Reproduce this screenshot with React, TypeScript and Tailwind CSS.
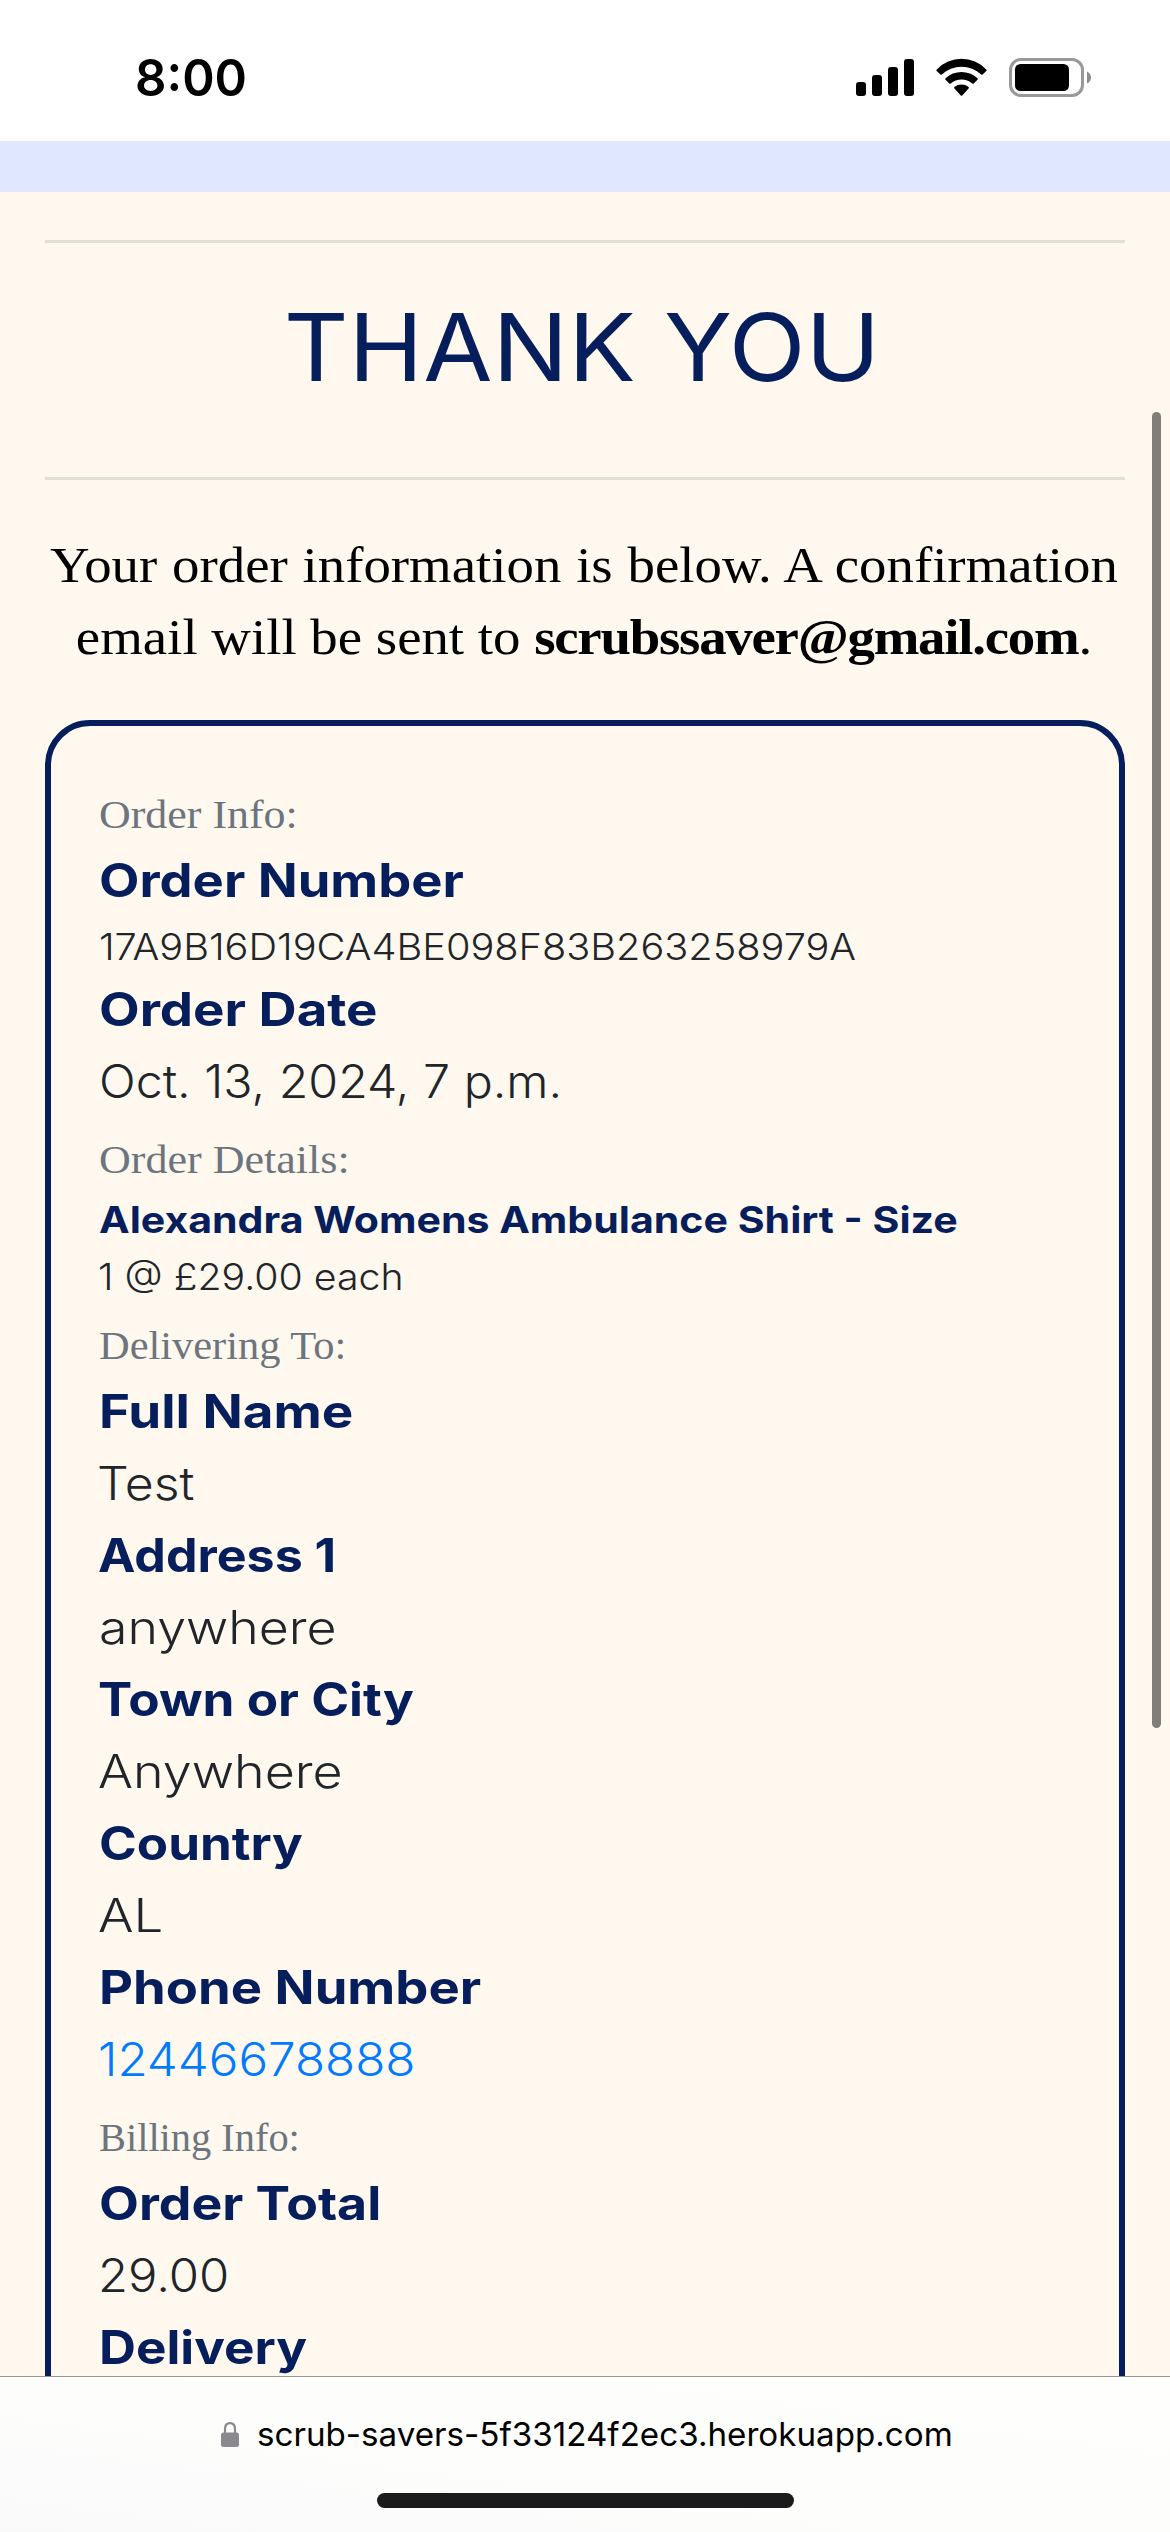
import type { ReactNode } from "react";

function Status() {
  return (
    <header className="flex h-[141px] shrink-0 items-start justify-between bg-white pr-[79px] pl-[135px]">
      <time className="origin-left scale-x-[0.964] font-['Inter',sans-serif] text-[51px] leading-[156px] font-semibold text-black">
        8:00
      </time>
      <div className="mt-[58px] flex items-start">
        <svg className="mt-px mr-[22px]" width="58" height="38" viewBox="0 0 58 38" fill="#000">
          <rect x="0" y="23" width="10" height="14" rx="3" />
          <rect x="16" y="16" width="10" height="21" rx="3" />
          <rect x="32" y="8" width="10" height="29" rx="3" />
          <rect x="48" y="0" width="10" height="37" rx="3" />
        </svg>
        <svg className="mr-[22px]" width="51" height="39" viewBox="0 0 51 39" fill="#000">
          <path d="M.8 11.4A34 34 0 0 1 50.2 11.4Q51.1 12.2 50.3 13L46.6 16.5Q45.9 17 45.2 16.4A29 29 0 0 0 5.800 16.400Q5.100 17 4.400 16.500L.7 13Q-.1 12.200 .8 11.400Z" />
          <path d="M9.600 20.200A23.500 23.500 0 0 1 41.400 20.200Q42.200 21 41.500 21.700L37.700 25.400Q37 26 36.300 25.500A16.500 16.500 0 0 0 14.700 25.500Q14 26 13.300 25.400L9.500 21.700Q8.800 21 9.600 20.200Z" />
          <path d="M18.400 29A11.500 11.500 0 0 1 32.600 29Q33.300 29.700 32.600 30.400L26.200 37.400Q25.500 38.100 24.800 37.400L18.400 30.400Q17.700 29.700 18.400 29Z" />
        </svg>
        <svg width="82" height="39" viewBox="0 0 82 39">
          <rect x="1.500" y="1.500" width="72" height="36" rx="10.500" fill="none" stroke="#999" strokeWidth="3" />
          <rect x="6" y="6" width="54" height="27" rx="5.500" fill="#000" />
          <path d="M78 13.500Q82 15.500 82 19.500T78 25.500Z" fill="#8f8f8f" />
        </svg>
      </div>
    </header>
  );
}

type RowProps = { children: ReactNode; fit?: string };

function Label({ children, fit = "" }: RowProps) {
  return (
    <h2 className={`origin-left font-['Liberation_Serif',serif] text-[41px] whitespace-nowrap text-[#6c757d] ${fit}`}>
      {children}
    </h2>
  );
}

function Term({ children, fit = "" }: RowProps) {
  return (
    <dt className={`h-[72px] origin-left text-[46px] leading-[72px] font-bold whitespace-nowrap text-[#061e5c] ${fit}`}>
      {children}
    </dt>
  );
}

function Value({ children, fit = "" }: RowProps) {
  return (
    <dd className={`h-[72px] origin-left text-[46px] leading-[72px] font-light whitespace-nowrap ${fit}`}>
      {children}
    </dd>
  );
}

export default function App() {
  return (
    <div className="relative flex h-[2532px] w-[1170px] flex-col overflow-hidden bg-[#fff8ef] font-['Inter',sans-serif] text-[#212529]">
      <Status />
      <div className="h-[51px] shrink-0 bg-[#e0e8ff]" />

      <main className="min-h-0 flex-1 overflow-hidden px-[45px] pt-12">
        <div className="h-[3px] bg-[#e6ddd5]" />
        <h1 className="mr-1.5 h-[234px] scale-x-[1.08] text-center text-[93px] leading-[208px] font-[440] whitespace-nowrap text-[#061e5c]">
          THANK YOU
        </h1>
        <div className="h-[3px] bg-[#e6ddd5]" />

        <p className="mr-0.5 h-[240px] scale-x-[1.075] pt-[49px] text-center font-['Liberation_Serif',serif] text-[51px] leading-[72px] whitespace-nowrap text-black">
          <span className="[word-spacing:1px]">Your order information is below. A confirmation</span>
          <br />
          email will be sent to <strong className="tracking-[-1.15px]">scrubssaver@gmail.com</strong>.
        </p>

        <section className="h-[1900px] rounded-[45px] border-[6px] border-[#061e5c] px-12 pt-12">
          <Label fit="h-[70px] w-fit leading-[80px] scale-x-[1.071]">Order Info:</Label>
          <dl>
            <Term fit="w-fit scale-x-[1.141]">Order Number</Term>
            <dd className="h-[57px] w-fit origin-left scale-x-[1.073] text-[37px] leading-[61px] font-light">
              17A9B16D19CA4BE098F83B263258979A
            </dd>
            <Term fit="w-fit scale-x-[1.147]">Order Date</Term>
            <Value fit="w-fit scale-x-[1.05]">Oct. 13, 2024, 7 p.m.</Value>
          </dl>

          <Label fit="h-[74px] w-fit leading-[84px] scale-x-[1.074]">Order Details:</Label>
          <dl>
            <dt className="h-[57px] w-fit origin-left scale-x-[1.11] text-[37px] leading-[57px] font-bold whitespace-nowrap text-[#061e5c]">
              Alexandra Womens Ambulance Shirt - Size
            </dt>
            <dd className="-ml-px h-[57px] w-fit origin-left scale-x-[1.061] text-[37px] leading-[57px] font-light">
              1 @ £29.00 each
            </dd>
          </dl>

          <Label fit="h-[70px] w-fit leading-[80px] scale-x-[1.035]">Delivering To:</Label>
          <dl>
            <Term fit="w-fit scale-x-[1.15]">Full Name</Term>
            <Value fit="-ml-0.5 w-fit scale-x-[1.085]">Test</Value>
            <Term fit="-ml-px w-fit scale-x-[1.09]">Address 1</Term>
            <Value fit="w-fit scale-x-[1.127]">anywhere</Value>
            <Term fit="-ml-px w-fit scale-x-[1.115]">Town or City</Term>
            <Value fit="-ml-px w-fit scale-x-[1.13]">Anywhere</Value>
            <Term fit="w-fit scale-x-[1.111]">Country</Term>
            <Value fit="-ml-px w-fit scale-x-[1.148]">AL</Value>
            <Term fit="w-fit scale-x-[1.143]">Phone Number</Term>
            <Value fit="-ml-px w-fit scale-x-[1.071] text-[#007bff]">12446678888</Value>
          </dl>

          <Label fit="h-[72px] w-fit leading-[84px] scale-x-[0.985]">Billing Info:</Label>
          <dl>
            <Term fit="w-fit scale-x-[1.126]">Order Total</Term>
            <Value fit="-ml-px w-fit scale-x-[1.063]">29.00</Value>
            <Term fit="w-fit scale-x-[1.113]">Delivery</Term>
          </dl>
        </section>
      </main>

      <footer className="flex h-[156px] shrink-0 flex-col items-center border-t border-[#979797] bg-linear-to-tr from-[#f9f9fa] via-[#fdfdfc] via-40% to-[#fefefd]">
        <div className="flex h-[116px] w-full items-start pl-[221px]">
          <svg className="mt-[45px] mr-[18px]" width="18" height="25" viewBox="0 0 18 25">
            <path d="M4 12V7.200C4 3.200 6 1.100 9 1.100S14 3.200 14 7.200V12" fill="none" stroke="#8a8a8e" strokeWidth="2.200" />
            <rect y="10.500" width="18" height="14.500" rx="2.500" fill="#8a8a8e" />
          </svg>
          <span className="origin-left scale-x-[1.005] text-[33px] leading-[114px] whitespace-nowrap text-black">
            scrub-savers-5f33124f2ec3.herokuapp.com
          </span>
        </div>
        <div className="h-[15px] w-[417px] rounded-full bg-[#1b1b1b]" />
      </footer>

      <div className="absolute top-[412px] left-[1152px] h-[1316px] w-[9px] rounded-full bg-[#817e78]" />
    </div>
  );
}
